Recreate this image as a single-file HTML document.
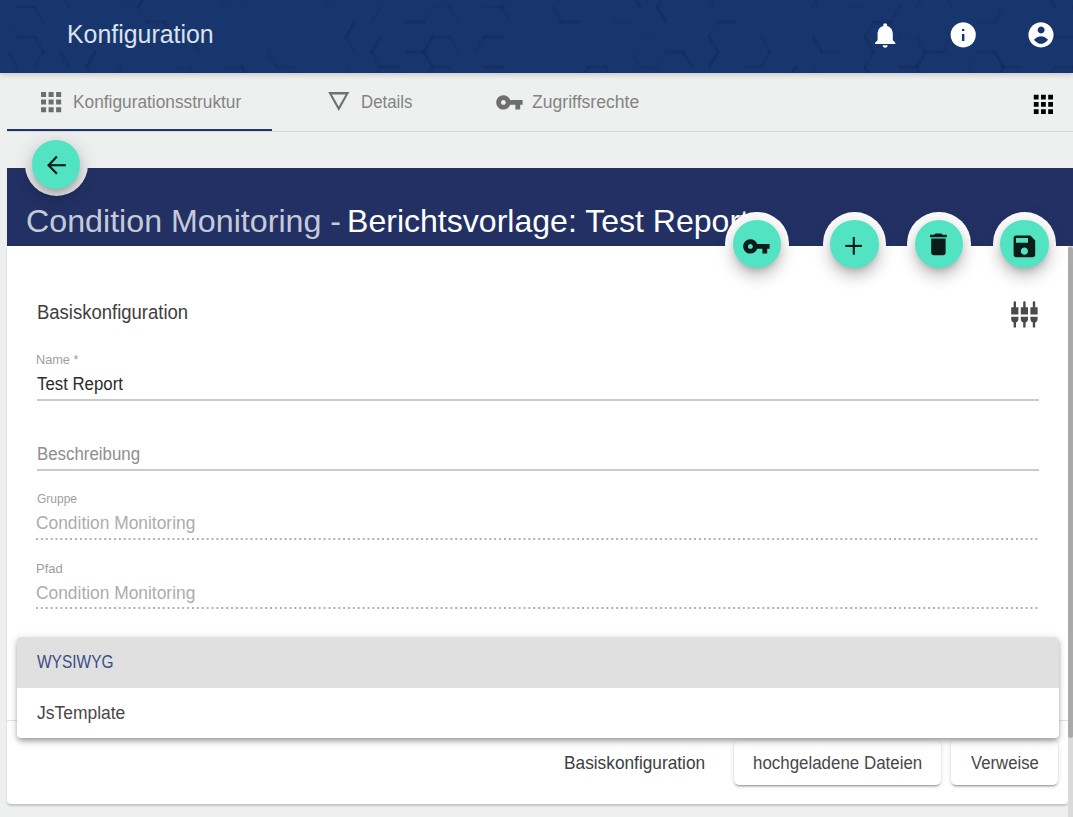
<!DOCTYPE html>
<html><head><meta charset="utf-8"><title>Konfiguration</title>
<style>
html,body{margin:0;padding:0;}
body{width:1073px;height:817px;overflow:hidden;position:relative;background:#eef0ef;font-family:"Liberation Sans",sans-serif;}
.t{position:absolute;white-space:nowrap;line-height:1;transform-origin:0 0;}
.ic{position:absolute;display:block;}
.abs{position:absolute;}
</style></head><body>
<div class="abs" style="left:0;top:0;width:1073px;height:72.6px;background:#18366e;box-shadow:0 2px 5px rgba(0,0,0,.16);z-index:2;overflow:hidden"><svg class="ic" style="left:0;top:0;width:1073px;height:73px" viewBox="0 0 1073 73"><g fill="none" stroke="#12285a" stroke-width="3" stroke-linecap="round"><path d="M-43.2 -8.0L-34.6 -23.0" opacity="0.18"/><path d="M-17.3 -23.0L-8.7 -8.0" opacity="0.32"/><path d="M-34.6 7.0L-17.3 7.0" opacity="0.31"/><path d="M-17.3 7.0L-8.7 22.0" opacity="0.28"/><path d="M-43.2 51.9L-34.6 37.0" opacity="0.15"/><path d="M-43.2 81.9L-34.6 66.9" opacity="0.20"/><path d="M-17.3 -23.0L-8.7 -37.9" opacity="0.45"/><path d="M-8.7 -37.9L8.7 -37.9" opacity="0.17"/><path d="M8.7 -37.9L17.3 -23.0" opacity="0.24"/><path d="M-8.7 -8.0L8.7 -8.0" opacity="0.34"/><path d="M8.7 22.0L17.3 37.0" opacity="0.14"/><path d="M-17.3 66.9L-8.7 51.9" opacity="0.38"/><path d="M8.7 51.9L17.3 66.9" opacity="0.34"/><path d="M-8.7 81.9L8.7 81.9" opacity="0.42"/><path d="M8.7 -8.0L17.3 -23.0" opacity="0.34"/><path d="M17.3 7.0L34.6 7.0" opacity="0.49"/><path d="M34.6 7.0L43.2 22.0" opacity="0.28"/><path d="M17.3 37.0L34.6 37.0" opacity="0.31"/><path d="M34.6 37.0L43.2 51.9" opacity="0.37"/><path d="M8.7 111.9L17.3 96.9" opacity="0.38"/><path d="M60.6 -8.0L69.2 7.0" opacity="0.39"/><path d="M34.6 66.9L43.2 51.9" opacity="0.27"/><path d="M60.6 51.9L69.2 66.9" opacity="0.30"/><path d="M34.6 96.9L43.2 81.9" opacity="0.16"/><path d="M43.2 81.9L60.6 81.9" opacity="0.41"/><path d="M60.6 81.9L69.2 96.9" opacity="0.21"/><path d="M86.5 -23.0L95.2 -8.0" opacity="0.29"/><path d="M69.2 37.0L86.5 37.0" opacity="0.28"/><path d="M86.5 66.9L95.2 81.9" opacity="0.19"/><path d="M60.6 111.9L69.2 96.9" opacity="0.21"/><path d="M86.5 -23.0L95.2 -37.9" opacity="0.12"/><path d="M86.5 66.9L95.2 51.9" opacity="0.46"/><path d="M112.5 -8.0L121.1 -23.0" opacity="0.36"/><path d="M121.1 -23.0L138.4 -23.0" opacity="0.15"/><path d="M138.4 -23.0L147.1 -8.0" opacity="0.18"/><path d="M121.1 7.0L138.4 7.0" opacity="0.12"/><path d="M138.4 7.0L147.1 22.0" opacity="0.16"/><path d="M121.1 37.0L138.4 37.0" opacity="0.45"/><path d="M112.5 81.9L121.1 66.9" opacity="0.22"/><path d="M112.5 111.9L121.1 96.9" opacity="0.44"/><path d="M147.1 -37.9L164.4 -37.9" opacity="0.16"/><path d="M138.4 7.0L147.1 -8.0" opacity="0.43"/><path d="M147.1 -8.0L164.4 -8.0" opacity="0.13"/><path d="M147.1 22.0L164.4 22.0" opacity="0.33"/><path d="M164.4 22.0L173.0 37.0" opacity="0.32"/><path d="M138.4 96.9L147.1 81.9" opacity="0.26"/><path d="M147.1 81.9L164.4 81.9" opacity="0.41"/><path d="M173.0 -23.0L190.3 -23.0" opacity="0.20"/><path d="M190.3 37.0L199.0 51.9" opacity="0.32"/><path d="M173.0 66.9L190.3 66.9" opacity="0.13"/><path d="M190.3 66.9L199.0 81.9" opacity="0.22"/><path d="M199.0 -8.0L216.3 -8.0" opacity="0.21"/><path d="M216.3 -8.0L224.9 7.0" opacity="0.20"/><path d="M190.3 96.9L199.0 81.9" opacity="0.37"/><path d="M242.2 -23.0L250.9 -8.0" opacity="0.42"/><path d="M224.9 66.9L242.2 66.9" opacity="0.17"/><path d="M242.2 66.9L250.9 81.9" opacity="0.46"/><path d="M224.9 96.9L242.2 96.9" opacity="0.43"/><path d="M242.2 7.0L250.8 -8.0" opacity="0.13"/><path d="M268.1 51.9L276.8 66.9" opacity="0.22"/><path d="M242.2 96.9L250.8 81.9" opacity="0.21"/><path d="M268.1 81.9L276.8 96.9" opacity="0.28"/><path d="M268.1 -8.0L276.8 -23.0" opacity="0.47"/><path d="M276.8 66.9L294.1 66.9" opacity="0.29"/><path d="M294.1 66.9L302.8 81.9" opacity="0.12"/><path d="M276.8 96.9L294.1 96.9" opacity="0.30"/><path d="M302.8 -37.9L320.1 -37.9" opacity="0.32"/><path d="M302.8 -8.0L320.1 -8.0" opacity="0.33"/><path d="M320.1 -8.0L328.7 7.0" opacity="0.23"/><path d="M346.0 37.0L354.7 51.9" opacity="0.33"/><path d="M346.0 66.9L354.7 81.9" opacity="0.17"/><path d="M328.7 96.9L346.0 96.9" opacity="0.21"/><path d="M346.0 96.9L354.7 111.9" opacity="0.37"/><path d="M371.9 -37.9L380.6 -23.0" opacity="0.39"/><path d="M354.6 -8.0L371.9 -8.0" opacity="0.46"/><path d="M346.0 37.0L354.6 22.0" opacity="0.48"/><path d="M371.9 51.9L380.6 66.9" opacity="0.28"/><path d="M371.9 81.9L380.6 96.9" opacity="0.24"/><path d="M380.6 -23.0L397.9 -23.0" opacity="0.33"/><path d="M371.9 22.0L380.6 7.0" opacity="0.25"/><path d="M371.9 51.9L380.6 37.0" opacity="0.49"/><path d="M371.9 81.9L380.6 66.9" opacity="0.22"/><path d="M380.6 66.9L397.9 66.9" opacity="0.42"/><path d="M397.9 66.9L406.6 81.9" opacity="0.17"/><path d="M397.9 -23.0L406.6 -37.9" opacity="0.18"/><path d="M406.6 -8.0L423.9 -8.0" opacity="0.14"/><path d="M406.6 22.0L423.9 22.0" opacity="0.48"/><path d="M406.6 51.9L423.9 51.9" opacity="0.45"/><path d="M423.9 51.9L432.5 66.9" opacity="0.45"/><path d="M432.5 -23.0L449.8 -23.0" opacity="0.17"/><path d="M423.9 22.0L432.5 7.0" opacity="0.16"/><path d="M432.5 7.0L449.8 7.0" opacity="0.14"/><path d="M449.8 7.0L458.5 22.0" opacity="0.24"/><path d="M423.9 51.9L432.5 37.0" opacity="0.41"/><path d="M432.5 37.0L449.8 37.0" opacity="0.31"/><path d="M449.8 37.0L458.5 51.9" opacity="0.25"/><path d="M423.9 81.9L432.5 66.9" opacity="0.22"/><path d="M432.5 66.9L449.8 66.9" opacity="0.40"/><path d="M423.9 111.9L432.5 96.9" opacity="0.30"/><path d="M449.8 96.9L458.5 111.9" opacity="0.43"/><path d="M458.4 81.9L475.8 81.9" opacity="0.17"/><path d="M475.8 81.9L484.4 96.9" opacity="0.40"/><path d="M475.8 -8.0L484.4 -23.0" opacity="0.18"/><path d="M484.4 -23.0L501.7 -23.0" opacity="0.44"/><path d="M484.4 7.0L501.7 7.0" opacity="0.21"/><path d="M501.7 7.0L510.4 22.0" opacity="0.29"/><path d="M475.8 51.9L484.4 37.0" opacity="0.29"/><path d="M484.4 37.0L501.7 37.0" opacity="0.49"/><path d="M484.4 66.9L501.7 66.9" opacity="0.49"/><path d="M501.7 66.9L510.4 81.9" opacity="0.26"/><path d="M475.8 111.9L484.4 96.9" opacity="0.27"/><path d="M501.7 -23.0L510.3 -37.9" opacity="0.31"/><path d="M510.3 -37.9L527.6 -37.9" opacity="0.22"/><path d="M527.6 -37.9L536.3 -23.0" opacity="0.27"/><path d="M501.7 7.0L510.3 -8.0" opacity="0.13"/><path d="M510.3 -8.0L527.6 -8.0" opacity="0.21"/><path d="M501.7 96.9L510.3 81.9" opacity="0.49"/><path d="M510.3 81.9L527.6 81.9" opacity="0.40"/><path d="M527.7 -8.0L536.3 -23.0" opacity="0.44"/><path d="M553.6 7.0L562.2 22.0" opacity="0.32"/><path d="M553.6 96.9L562.2 111.9" opacity="0.13"/><path d="M553.6 -23.0L562.2 -37.9" opacity="0.26"/><path d="M562.2 -37.9L579.5 -37.9" opacity="0.44"/><path d="M562.2 22.0L579.5 22.0" opacity="0.42"/><path d="M553.6 96.9L562.2 81.9" opacity="0.40"/><path d="M562.2 81.9L579.5 81.9" opacity="0.15"/><path d="M579.5 81.9L588.2 96.9" opacity="0.40"/><path d="M579.6 -8.0L588.2 -23.0" opacity="0.40"/><path d="M579.6 81.9L588.2 66.9" opacity="0.18"/><path d="M588.2 66.9L605.5 66.9" opacity="0.40"/><path d="M605.5 66.9L614.1 81.9" opacity="0.34"/><path d="M579.6 111.9L588.2 96.9" opacity="0.14"/><path d="M588.2 96.9L605.5 96.9" opacity="0.38"/><path d="M614.2 -37.9L631.5 -37.9" opacity="0.32"/><path d="M614.2 -8.0L631.5 -8.0" opacity="0.46"/><path d="M631.5 -8.0L640.1 7.0" opacity="0.49"/><path d="M614.2 22.0L631.5 22.0" opacity="0.29"/><path d="M631.5 51.9L640.1 66.9" opacity="0.20"/><path d="M614.2 81.9L631.5 81.9" opacity="0.34"/><path d="M631.5 81.9L640.1 96.9" opacity="0.32"/><path d="M640.1 -23.0L657.4 -23.0" opacity="0.43"/><path d="M657.4 7.0L666.0 22.0" opacity="0.46"/><path d="M640.1 37.0L657.4 37.0" opacity="0.12"/><path d="M640.1 66.9L657.4 66.9" opacity="0.17"/><path d="M631.5 111.9L640.1 96.9" opacity="0.44"/><path d="M640.1 96.9L657.4 96.9" opacity="0.41"/><path d="M657.4 -23.0L666.1 -37.9" opacity="0.47"/><path d="M657.4 7.0L666.1 -8.0" opacity="0.26"/><path d="M657.4 66.9L666.1 51.9" opacity="0.14"/><path d="M666.1 51.9L683.4 51.9" opacity="0.44"/><path d="M683.4 51.9L692.0 66.9" opacity="0.48"/><path d="M657.4 96.9L666.1 81.9" opacity="0.22"/><path d="M683.4 81.9L692.0 96.9" opacity="0.26"/><path d="M709.3 37.0L717.9 51.9" opacity="0.40"/><path d="M683.4 111.9L692.0 96.9" opacity="0.14"/><path d="M709.3 96.9L717.9 111.9" opacity="0.30"/><path d="M718.0 -37.9L735.2 -37.9" opacity="0.40"/><path d="M709.3 7.0L718.0 -8.0" opacity="0.37"/><path d="M718.0 -8.0L735.2 -8.0" opacity="0.33"/><path d="M709.3 37.0L718.0 22.0" opacity="0.18"/><path d="M718.0 22.0L735.2 22.0" opacity="0.46"/><path d="M709.3 66.9L718.0 51.9" opacity="0.46"/><path d="M709.3 96.9L718.0 81.9" opacity="0.19"/><path d="M718.0 81.9L735.2 81.9" opacity="0.25"/><path d="M735.2 81.9L743.9 96.9" opacity="0.21"/><path d="M735.3 -8.0L743.9 -23.0" opacity="0.34"/><path d="M761.2 37.0L769.9 51.9" opacity="0.23"/><path d="M743.9 66.9L761.2 66.9" opacity="0.31"/><path d="M743.9 96.9L761.2 96.9" opacity="0.22"/><path d="M761.2 96.9L769.9 111.9" opacity="0.27"/><path d="M769.9 -8.0L787.1 -8.0" opacity="0.13"/><path d="M761.2 66.9L769.9 51.9" opacity="0.27"/><path d="M787.1 81.9L795.8 96.9" opacity="0.16"/><path d="M787.2 -8.0L795.8 -23.0" opacity="0.32"/><path d="M813.1 37.0L821.8 51.9" opacity="0.42"/><path d="M787.2 81.9L795.8 66.9" opacity="0.47"/><path d="M813.1 66.9L821.8 81.9" opacity="0.17"/><path d="M787.2 111.9L795.8 96.9" opacity="0.36"/><path d="M813.1 96.9L821.8 111.9" opacity="0.15"/><path d="M813.1 7.0L821.8 -8.0" opacity="0.35"/><path d="M821.8 -8.0L839.1 -8.0" opacity="0.23"/><path d="M821.8 51.9L839.1 51.9" opacity="0.21"/><path d="M821.8 81.9L839.1 81.9" opacity="0.13"/><path d="M865.0 -23.0L873.6 -8.0" opacity="0.37"/><path d="M847.7 7.0L865.0 7.0" opacity="0.13"/><path d="M865.0 37.0L873.6 51.9" opacity="0.42"/><path d="M865.0 66.9L873.6 81.9" opacity="0.49"/><path d="M839.1 111.9L847.7 96.9" opacity="0.43"/><path d="M847.7 96.9L865.0 96.9" opacity="0.20"/><path d="M865.0 -23.0L873.7 -37.9" opacity="0.48"/><path d="M891.0 -37.9L899.6 -23.0" opacity="0.20"/><path d="M865.0 37.0L873.7 22.0" opacity="0.27"/><path d="M873.7 22.0L891.0 22.0" opacity="0.49"/><path d="M891.0 22.0L899.6 37.0" opacity="0.14"/><path d="M865.0 66.9L873.7 51.9" opacity="0.27"/><path d="M891.0 -8.0L899.6 -23.0" opacity="0.19"/><path d="M891.0 22.0L899.6 7.0" opacity="0.37"/><path d="M899.6 37.0L916.9 37.0" opacity="0.12"/><path d="M916.9 37.0L925.5 51.9" opacity="0.25"/><path d="M899.6 66.9L916.9 66.9" opacity="0.49"/><path d="M916.9 66.9L925.5 81.9" opacity="0.26"/><path d="M916.9 -23.0L925.6 -37.9" opacity="0.30"/><path d="M916.9 7.0L925.6 -8.0" opacity="0.26"/><path d="M942.9 -8.0L951.5 7.0" opacity="0.28"/><path d="M942.9 22.0L951.5 37.0" opacity="0.13"/><path d="M916.9 66.9L925.6 51.9" opacity="0.47"/><path d="M925.6 51.9L942.9 51.9" opacity="0.40"/><path d="M925.6 81.9L942.9 81.9" opacity="0.48"/><path d="M942.9 -8.0L951.5 -23.0" opacity="0.39"/><path d="M951.5 -23.0L968.8 -23.0" opacity="0.22"/><path d="M968.8 -23.0L977.5 -8.0" opacity="0.41"/><path d="M942.9 51.9L951.5 37.0" opacity="0.21"/><path d="M968.8 66.9L977.5 81.9" opacity="0.28"/><path d="M968.8 96.9L977.5 111.9" opacity="0.42"/><path d="M977.5 -8.0L994.8 -8.0" opacity="0.24"/><path d="M977.5 22.0L994.8 22.0" opacity="0.19"/><path d="M968.8 66.9L977.5 51.9" opacity="0.14"/><path d="M977.5 51.9L994.8 51.9" opacity="0.33"/><path d="M994.8 51.9L1003.4 66.9" opacity="0.49"/><path d="M994.8 81.9L1003.4 96.9" opacity="0.15"/><path d="M994.8 -8.0L1003.4 -23.0" opacity="0.31"/><path d="M994.8 22.0L1003.4 7.0" opacity="0.28"/><path d="M994.8 81.9L1003.4 66.9" opacity="0.44"/><path d="M1003.4 66.9L1020.7 66.9" opacity="0.34"/><path d="M1003.4 96.9L1020.7 96.9" opacity="0.21"/><path d="M1020.7 96.9L1029.4 111.9" opacity="0.18"/><path d="M1046.7 -37.9L1055.3 -23.0" opacity="0.27"/><path d="M1046.7 -8.0L1055.3 7.0" opacity="0.43"/><path d="M1046.7 22.0L1055.3 37.0" opacity="0.30"/><path d="M1020.7 96.9L1029.3 81.9" opacity="0.23"/><path d="M1029.3 81.9L1046.7 81.9" opacity="0.19"/><path d="M1072.6 7.0L1081.2 22.0" opacity="0.42"/><path d="M1055.3 37.0L1072.6 37.0" opacity="0.35"/><path d="M1046.7 81.9L1055.3 66.9" opacity="0.26"/><path d="M1055.3 66.9L1072.6 66.9" opacity="0.20"/><path d="M1072.6 66.9L1081.2 81.9" opacity="0.35"/><path d="M1055.3 96.9L1072.6 96.9" opacity="0.12"/><path d="M1072.6 96.9L1081.2 111.9" opacity="0.38"/><path d="M1072.6 -23.0L1081.2 -37.9" opacity="0.24"/><path d="M1081.2 -37.9L1098.6 -37.9" opacity="0.42"/><path d="M1072.6 7.0L1081.2 -8.0" opacity="0.16"/><path d="M1081.2 22.0L1098.6 22.0" opacity="0.18"/><path d="M1081.2 51.9L1098.6 51.9" opacity="0.24"/><path d="M1072.6 96.9L1081.2 81.9" opacity="0.34"/><path d="M1098.6 22.0L1107.2 7.0" opacity="0.40"/><path d="M1107.2 7.0L1124.5 7.0" opacity="0.12"/><path d="M1124.5 66.9L1133.2 81.9" opacity="0.13"/></g></svg></div>
<div style="position:absolute;left:0;top:0;width:1073px;height:72px;z-index:3"><div class="t" style="left:67.20px;top:22.37px;font-size:25.6px;color:#dbe2ee;transform:scaleX(0.9721);">Konfiguration</div>
<svg class="ic" style="left:870.10px;top:19.90px;width:30.40px;height:30.40px;" viewBox="0 0 24 24"><path fill="#ffffff" d="M12 22c1.1 0 2-.9 2-2h-4c0 1.1.89 2 2 2zm6-6v-5c0-3.07-1.64-5.64-4.5-6.32V4c0-.83-.67-1.5-1.5-1.5s-1.5.67-1.5 1.5v.68C7.63 5.36 6 7.92 6 11v5l-2 2v1h16v-1l-2-2z"/></svg>
<svg class="ic" style="left:940px;top:15px;width:40px;height:40px" viewBox="940 15 40 40"><path fill="#ffffff" fill-rule="evenodd" d="M963.2 22.3a12.6 12.6 0 1 0 0.001 0Z M961.95 34.1h2.45v6.8h-2.45Z M961.95 28.9h2.45v2.2h-2.45Z"/></svg><svg class="ic" style="left:1020px;top:15px;width:40px;height:40px" viewBox="1020 15 40 40"><path fill="#ffffff" fill-rule="evenodd" d="M1041 22.35a12.6 12.6 0 1 0 0.001 0Z M1041.1 26.6a3.45 3.45 0 1 0 0.001 0Z M1033.9 39.7Q1041 33.0 1048.1 39.7Q1041 48.0 1033.9 39.7Z"/></svg></div>
<div class="abs" style="left:7px;top:131px;width:1066px;height:1px;background:#d6d8d7"></div>
<div class="abs" style="left:7px;top:129px;width:265px;height:2px;background:#1f3572"></div>
<svg class="ic" style="left:36.20px;top:87.10px;width:30.20px;height:30.20px;" viewBox="0 0 24 24"><path fill="#6e6e6e" d="M4 8h4V4H4v4zm6 12h4v-4h-4v4zm-6 0h4v-4H4v4zm0-6h4v-4H4v4zm6 0h4v-4h-4v4zm6-10v4h4V4h-4zm-6 4h4V4h-4v4zm6 6h4v-4h-4v4zm0 6h4v-4h-4v4z"/></svg>
<div class="t" style="left:73.30px;top:92.95px;font-size:18.71px;color:#838484;transform:scaleX(0.9254);">Konfigurationsstruktur</div>
<svg class="ic" style="left:326px;top:90px;width:26px;height:24px" viewBox="0 0 26 24"><path fill="#707070" fill-rule="evenodd" d="M2.2 2.1 H23.3 L12.75 21 Z M5.9 4.6 H19.6 L12.75 16.6 Z"/></svg>
<div class="t" style="left:360.90px;top:92.96px;font-size:18.69px;color:#838484;transform:scaleX(0.9);">Details</div>
<svg class="ic" style="left:494.80px;top:87.80px;width:28.80px;height:28.80px;" viewBox="0 0 24 24"><path fill="#6e6e6e" d="M12.65 10C11.83 7.67 9.61 6 7 6c-3.31 0-6 2.69-6 6s2.69 6 6 6c2.61 0 4.83-1.67 5.65-4H17v4h4v-4h2v-4H12.65zM7 14c-1.1 0-2-.9-2-2s.9-2 2-2 2 .9 2 2-.9 2-2 2z"/></svg>
<div class="t" style="left:532.00px;top:92.95px;font-size:18.71px;color:#838484;transform:scaleX(0.9416);">Zugriffsrechte</div>
<svg class="ic" style="left:1029.20px;top:90.20px;width:28.80px;height:28.80px;" viewBox="0 0 24 24"><path fill="#000000" d="M4 8h4V4H4v4zm6 12h4v-4h-4v4zm-6 0h4v-4H4v4zm0-6h4v-4H4v4zm6 0h4v-4h-4v4zm6-10v4h4V4h-4zm-6 4h4V4h-4v4zm6 6h4v-4h-4v4zm0 6h4v-4h-4v4z"/></svg>
<div class="abs" style="left:7px;top:168px;width:1066px;height:78px;background:#223064"></div>
<div class="t" style="left:26.00px;top:206.01px;font-size:31.8px;color:#c5cad8;transform:scaleX(1.0129);">Condition Monitoring -</div>
<div class="t" style="left:347.40px;top:206.30px;font-size:31.8px;color:#ffffff;transform:scaleX(1.008);">Berichtsvorlage: Test Report</div>
<div class="abs" style="left:7px;top:246px;width:1061px;height:558px;background:#ffffff;border-radius:0 0 4px 4px;box-shadow:0 2px 2px rgba(0,0,0,.18)"></div>
<div class="abs" style="left:1068px;top:246px;width:5px;height:571px;background:#dadada"></div>
<div class="abs" style="left:1068px;top:247px;width:5px;height:491px;background:#a9aaa9;border-radius:2.5px"></div>
<div class="t" style="left:37.00px;top:301.84px;font-size:20.07px;color:#3e3e3e;transform:scaleX(0.9216);">Basiskonfiguration</div>
<svg class="ic" style="left:1010.10px;top:300.20px;width:28.80px;height:28.80px;" viewBox="0 0 24 24"><path fill="#4a4a4a" d="M5 2c0-.55-.45-1-1-1s-1 .45-1 1v4H1v6h6V6H5V2zm4 14c0 1.3.84 2.4 2 2.82V23h2v-4.18c1.16-.41 2-1.51 2-2.82v-2H9v2zm-8 0c0 1.3.84 2.4 2 2.82V23h2v-4.18C6.16 18.4 7 17.3 7 16v-2H1v2zM21 6V2c0-.55-.45-1-1-1s-1 .45-1 1v4h-2v6h6V6h-2zm-8-4c0-.55-.45-1-1-1s-1 .45-1 1v4H9v6h6V6h-2V2zm4 14c0 1.3.84 2.4 2 2.82V23h2v-4.18c1.16-.41 2-1.51 2-2.82v-2h-6v2z"/></svg>
<div class="t" style="left:36.00px;top:354.18px;font-size:12.8px;color:#9e9e9e;transform:scaleX(0.9929);">Name *</div>
<div class="t" style="left:37.20px;top:375.09px;font-size:18.47px;color:#2c2c2c;transform:scaleX(0.9105);">Test Report</div>
<div class="abs" style="left:37px;top:399px;width:1002px;height:2px;background:#cacaca"></div>
<div class="t" style="left:37.00px;top:444.95px;font-size:18.76px;color:#8e8e8e;transform:scaleX(0.8991);">Beschreibung</div>
<div class="abs" style="left:37px;top:469px;width:1002px;height:2px;background:#cacaca"></div>
<div class="t" style="left:36.90px;top:492.90px;font-size:12.86px;color:#9e9e9e;transform:scaleX(0.9326);">Gruppe</div>
<div class="t" style="left:36.40px;top:514.40px;font-size:18.0px;color:#acacac;transform:scaleX(0.965);">Condition Monitoring</div>
<div class="abs" style="left:36.3px;top:537.9px;width:1002px;height:2px;background-image:linear-gradient(to right,#b0b0b0 0,#b0b0b0 36%,transparent 0);background-size:4.88px 2px"></div>
<div class="t" style="left:36.00px;top:563.08px;font-size:12.8px;color:#9e9e9e;transform:scaleX(1.012);">Pfad</div>
<div class="t" style="left:36.40px;top:583.60px;font-size:18.0px;color:#acacac;transform:scaleX(0.965);">Condition Monitoring</div>
<div class="abs" style="left:36.3px;top:607.4px;width:1002px;height:2px;background-image:linear-gradient(to right,#b0b0b0 0,#b0b0b0 36%,transparent 0);background-size:4.88px 2px"></div>
<div class="abs" style="left:7px;top:720px;width:1061px;height:1px;background:#e2e2e2"></div>
<div class="t" style="left:563.50px;top:753.82px;font-size:18.91px;color:#3e3e3e;transform:scaleX(0.9137);">Basiskonfiguration</div>
<div class="abs" style="left:733.5px;top:741px;width:207.5px;height:43.5px;background:#fff;border-radius:5px;box-shadow:0 3px 1px -2px rgba(0,0,0,.2),0 2px 2px 0 rgba(0,0,0,.14),0 1px 5px 0 rgba(0,0,0,.12)"></div>
<div class="t" style="left:752.60px;top:753.85px;font-size:18.76px;color:#484848;transform:scaleX(0.9016);">hochgeladene Dateien</div>
<div class="abs" style="left:950.7px;top:741px;width:107.5px;height:43.5px;background:#fff;border-radius:5px;box-shadow:0 3px 1px -2px rgba(0,0,0,.2),0 2px 2px 0 rgba(0,0,0,.14),0 1px 5px 0 rgba(0,0,0,.12)"></div>
<div class="t" style="left:970.70px;top:753.85px;font-size:18.76px;color:#484848;transform:scaleX(0.8908);">Verweise</div>
<div class="abs" style="left:17px;top:637.4px;width:1042px;height:101px;background:#fff;border-radius:4px;box-shadow:0 2px 4px -1px rgba(0,0,0,.2),0 4px 5px 0 rgba(0,0,0,.14),0 1px 10px 0 rgba(0,0,0,.12),0 9px 10px -4px rgba(0,0,0,.07);overflow:hidden;z-index:5"><div class="abs" style="left:0;top:0;width:1042px;height:50.5px;background:#e0e0e0"></div></div>
<div style="position:absolute;left:0;top:0;z-index:6"><div class="t" style="left:37.20px;top:653.20px;font-size:18.6px;color:#3d4b84;transform:scaleX(0.832);">WYSIWYG</div>
<div class="t" style="left:37.20px;top:704.39px;font-size:18.47px;color:#484848;transform:scaleX(0.9462);">JsTemplate</div>
</div>
<div class="abs" style="left:24.90px;top:132.30px;width:63.4px;height:63.4px;border-radius:50%;background:#eef0ef;z-index:7"></div>
<div class="abs" style="left:31.50px;top:140.00px;width:48.8px;height:48.8px;border-radius:50%;background:#52e3c2;box-shadow:0 5px 7px -3px rgba(0,0,0,.2),0 9px 14px 1px rgba(0,0,0,.13),0 3px 20px 3px rgba(0,0,0,.1);z-index:8"></div>
<svg class="ic" style="left:40px;top:150px;width:32px;height:32px;z-index:9" viewBox="40 150 32 32"><g fill="none" stroke="#0b1d18" stroke-width="2.2"><path d="M49 165.2H65.8"/><path d="M56.9 156.6L48.6 165.2L56.9 173.8" stroke-linejoin="miter"/></g></svg>
<div class="abs" style="left:725.40px;top:212.40px;width:63.4px;height:63.4px;border-radius:50%;background:#ffffff;z-index:7"></div>
<div class="abs" style="left:732.70px;top:219.70px;width:48.8px;height:48.8px;border-radius:50%;background:#52e3c2;box-shadow:0 5px 7px -3px rgba(0,0,0,.2),0 9px 14px 1px rgba(0,0,0,.13),0 3px 20px 3px rgba(0,0,0,.1);z-index:8"></div>
<div style="position:absolute;left:0;top:0;z-index:9"><svg class="ic" style="left:742.10px;top:231.60px;width:28.80px;height:28.80px;" viewBox="0 0 24 24"><path fill="#0b1d18" d="M12.65 10C11.83 7.67 9.61 6 7 6c-3.31 0-6 2.69-6 6s2.69 6 6 6c2.61 0 4.83-1.67 5.65-4H17v4h4v-4h2v-4H12.65zM7 14c-1.1 0-2-.9-2-2s.9-2 2-2 2 .9 2 2-.9 2-2 2z"/></svg>
</div>
<div class="abs" style="left:822.60px;top:212.40px;width:63.4px;height:63.4px;border-radius:50%;background:#ffffff;z-index:7"></div>
<div class="abs" style="left:829.90px;top:219.70px;width:48.8px;height:48.8px;border-radius:50%;background:#52e3c2;box-shadow:0 5px 7px -3px rgba(0,0,0,.2),0 9px 14px 1px rgba(0,0,0,.13),0 3px 20px 3px rgba(0,0,0,.1);z-index:8"></div>
<svg class="ic" style="left:840px;top:232px;width:28px;height:28px;z-index:9" viewBox="840 232 28 28"><g fill="#0b1d18"><rect x="845.3" y="244.9" width="16.7" height="2.1"/><rect x="852.75" y="237" width="2.1" height="17.7"/></g></svg>
<div class="abs" style="left:907.30px;top:212.40px;width:63.4px;height:63.4px;border-radius:50%;background:#ffffff;z-index:7"></div>
<div class="abs" style="left:914.60px;top:219.70px;width:48.8px;height:48.8px;border-radius:50%;background:#52e3c2;box-shadow:0 5px 7px -3px rgba(0,0,0,.2),0 9px 14px 1px rgba(0,0,0,.13),0 3px 20px 3px rgba(0,0,0,.1);z-index:8"></div>
<div style="position:absolute;left:0;top:0;z-index:9"><svg class="ic" style="left:924.30px;top:229.60px;width:28.80px;height:28.80px;" viewBox="0 0 24 24"><path fill="#0b1d18" d="M6 19c0 1.1.9 2 2 2h8c1.1 0 2-.9 2-2V7H6v12zM19 4h-3.5l-1-1h-5l-1 1H5v2h14V4z"/></svg>
</div>
<div class="abs" style="left:992.70px;top:212.40px;width:63.4px;height:63.4px;border-radius:50%;background:#ffffff;z-index:7"></div>
<div class="abs" style="left:1000.00px;top:219.70px;width:48.8px;height:48.8px;border-radius:50%;background:#52e3c2;box-shadow:0 5px 7px -3px rgba(0,0,0,.2),0 9px 14px 1px rgba(0,0,0,.13),0 3px 20px 3px rgba(0,0,0,.1);z-index:8"></div>
<div style="position:absolute;left:0;top:0;z-index:9"><svg class="ic" style="left:1009.50px;top:231.50px;width:28.80px;height:28.80px;" viewBox="0 0 24 24"><path fill="#0b1d18" d="M17 3H5c-1.11 0-2 .9-2 2v14c0 1.1.89 2 2 2h14c1.1 0 2-.9 2-2V7l-4-4zm-5 16c-1.66 0-3-1.34-3-3s1.34-3 3-3 3 1.34 3 3-1.34 3-3 3zm3-10H5V5h10v4z"/></svg>
</div>
</body></html>
